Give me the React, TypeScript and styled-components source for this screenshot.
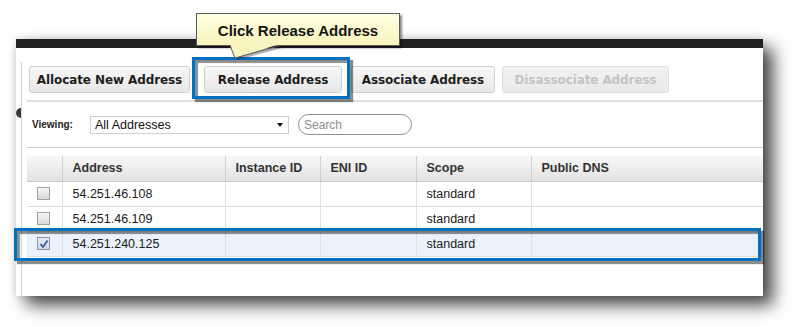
import React from 'react';
import styled, { createGlobalStyle } from 'styled-components';

const GlobalStyle = createGlobalStyle`
  body {
    margin: 0;
    background: #fff;
    font-family: "Liberation Sans", Arial, sans-serif;
  }
`;

const Canvas = styled.div`
  position: relative;
  width: 792px;
  height: 327px;
  box-sizing: border-box;
  padding: 39px 0 0 16px;
  background: #fff;
  overflow: hidden;
`;

const Panel = styled.div`
  width: 747px;
  height: 257px;
  display: flex;
  flex-direction: column;
  background: #fff;
  box-shadow: 10px 9px 16px rgba(0, 0, 0, 0.72), 0 0 8px rgba(0, 0, 0, 0.12);
`;

const DarkBar = styled.div`
  height: 9px;
  background: #222;
`;

const Body = styled.div`
  flex: 1;
  display: flex;
`;

const LeftStrip = styled.div`
  width: 5px;
`;

const Handle = styled.div`
  margin-top: 60px;
  width: 5px;
  height: 10px;
  border-radius: 5px 0 0 5px;
  background: #3a3a3a;
`;

const Content = styled.div`
  flex: 1;
  margin-top: 14px;
  border-left: 1px solid #d6d6d6;
  padding-left: 5px;
`;

const Toolbar = styled.div`
  display: flex;
  padding: 4px 0 7px 2px;
  border-bottom: 2px solid #e0e0e0;
`;

const Button = styled.button<{ $w: number; $mr?: number; $disabled?: boolean }>`
  width: ${(p) => p.$w}px;
  height: 27px;
  margin: 0 ${(p) => p.$mr ?? 0}px 0 0;
  padding: 0;
  box-sizing: border-box;
  border: 1px solid ${(p) => (p.$disabled ? '#dedede' : '#cfcfcf')};
  border-radius: 3px;
  background: ${(p) =>
    p.$disabled ? 'linear-gradient(#f2f2f2, #e9e9e9)' : 'linear-gradient(#f8f8f8, #e7e7e7)'};
  color: ${(p) => (p.$disabled ? '#c4c4c4' : '#1e1e1e')};
  font-family: "DejaVu Sans", Verdana, sans-serif;
  font-weight: bold;
  font-size: 12px;
  letter-spacing: -0.1px;
  cursor: pointer;
`;

const FilterRow = styled.div`
  height: 45px;
  display: flex;
  align-items: center;
  padding-left: 5px;
  border-bottom: 1px solid #d0d0d0;
`;

const Label = styled.span`
  width: 58px;
  font-weight: bold;
  font-size: 10px;
  color: #222;
`;

const Select = styled.div`
  position: relative;
  width: 199px;
  height: 18px;
  box-sizing: border-box;
  border: 1px solid #cfcfcf;
  padding-left: 4px;
  display: flex;
  align-items: center;
  font-size: 12.5px;
  color: #111;
`;

const Arrow = styled.span`
  margin-left: auto;
  margin-right: 5px;
  width: 0;
  height: 0;
  border-left: 3.5px solid transparent;
  border-right: 3.5px solid transparent;
  border-top: 4px solid #111;
`;

const Search = styled.div`
  margin-left: 9px;
  width: 114px;
  height: 21px;
  box-sizing: border-box;
  border: 1px solid #8f8f8f;
  border-radius: 11px;
  padding-left: 5px;
  display: flex;
  align-items: center;
  font-size: 12px;
  color: #8c8c8c;
`;

const Table = styled.table`
  margin-top: 8px;
  width: 736px;
  table-layout: fixed;
  border-collapse: collapse;
`;

const Th = styled.th<{ $w: number }>`
  width: ${(p) => p.$w}px;
  height: 25px;
  padding: 0 0 0 10px;
  box-sizing: border-box;
  text-align: left;
  font-size: 12.5px;
  font-weight: bold;
  color: #333;
  background: linear-gradient(#f8f8f8, #e2e2e2);
  border-bottom: 1px solid #c9c9c9;
  & + & {
    border-left: 1px solid #d0d0d0;
  }
`;

const Tr = styled.tr<{ $selected?: boolean }>`
  background: ${(p) => (p.$selected ? '#eaf2fd' : '#fff')};
  border-bottom: 1px solid #dcdcdc;
`;

const Td = styled.td`
  height: 24px;
  padding: 0 0 0 10px;
  font-size: 12.5px;
  color: #1a1a1a;
  & + & {
    border-left: 1px solid #e0e0e0;
  }
`;

const Check = styled.span<{ $checked?: boolean }>`
  display: block;
  width: 13px;
  height: 13px;
  box-sizing: border-box;
  border: 1px solid ${(p) => (p.$checked ? '#8a94ac' : '#a2a2a2')};
  background: ${(p) =>
    p.$checked ? 'linear-gradient(#e6ebf5, #cfd7e8)' : 'linear-gradient(#f6f6f6, #dadada)'};
  position: relative;
  svg {
    position: absolute;
    left: 1px;
    top: 1px;
  }
`;

const Callout = styled.div`
  position: absolute;
  left: 196px;
  top: 13px;
  width: 204px;
  height: 33px;
  box-sizing: border-box;
  border: 1px solid #5a5a5a;
  background: linear-gradient(#ffffe2, #f9f4bd);
  box-shadow: 2px 2px 2px rgba(0, 0, 0, 0.45);
  display: flex;
  align-items: center;
  justify-content: center;
  padding-top: 2px;
  font-weight: bold;
  font-size: 15px;
  color: #151515;
  z-index: 3;
`;

const Tail = styled.svg`
  position: absolute;
  left: 226px;
  top: 44px;
  z-index: 4;
  overflow: visible;
`;

const Highlight = styled.div<{ $l: number; $t: number; $w: number; $h: number }>`
  position: absolute;
  left: ${(p) => p.$l}px;
  top: ${(p) => p.$t}px;
  width: ${(p) => p.$w}px;
  height: ${(p) => p.$h}px;
  box-sizing: border-box;
  border: 3px solid #0070c0;
  box-shadow: 3px 3px 1px rgba(0, 0, 0, 0.45), inset 3px 3px 1px rgba(0, 0, 0, 0.45);
  z-index: 2;
`;

const rows = [
  { ip: '54.251.46.108', scope: 'standard' },
  { ip: '54.251.46.109', scope: 'standard' },
  { ip: '54.251.240.125', scope: 'standard', selected: true },
];

const CheckMark = () => (
  <svg width="10" height="10" viewBox="0 0 10 10">
    <path d="M1.5 5 L4 8 L8.5 1.5" fill="none" stroke="#2d4f9e" strokeWidth="1.6" />
  </svg>
);

const App: React.FC = () => {
  return (
    <Canvas>
      <GlobalStyle />
      <Panel>
        <DarkBar />
        <Body>
          <LeftStrip>
            <Handle />
          </LeftStrip>
          <Content>
            <Toolbar>
              <Button $w={161} $mr={14}>Allocate New Address</Button>
              <Button $w={138} $mr={9}>Release Address</Button>
              <Button $w={144} $mr={7}>Associate Address</Button>
              <Button $w={167} $disabled>Disassociate Address</Button>
            </Toolbar>
            <FilterRow>
              <Label>Viewing:</Label>
              <Select>
                All Addresses
                <Arrow />
              </Select>
              <Search>Search</Search>
            </FilterRow>
            <Table>
              <thead>
                <tr>
                  <Th $w={35} />
                  <Th $w={163}>Address</Th>
                  <Th $w={95}>Instance ID</Th>
                  <Th $w={96}>ENI ID</Th>
                  <Th $w={115}>Scope</Th>
                  <Th $w={232}>Public DNS</Th>
                </tr>
              </thead>
              <tbody>
                {rows.map((r) => (
                  <Tr key={r.ip} $selected={r.selected}>
                    <Td>
                      <Check $checked={r.selected}>{r.selected && <CheckMark />}</Check>
                    </Td>
                    <Td>{r.ip}</Td>
                    <Td />
                    <Td />
                    <Td>{r.scope}</Td>
                    <Td />
                  </Tr>
                ))}
              </tbody>
            </Table>
          </Content>
        </Body>
      </Panel>

      <Callout>Click Release Address</Callout>
      <Tail width="60" height="16">
        <path d="M6 4 L11 16 L56 4 Z" fill="rgba(0,0,0,0.3)" />
        <path d="M4 0 L9 14 L54 0 Z" fill="#f9f4bf" />
        <path d="M4 1.5 L9 14 L54 1.5" fill="none" stroke="#5a5a5a" strokeWidth="1" />
      </Tail>
      <Highlight $l={192} $t={57} $w={158} $h={42} />
      <Highlight $l={14} $t={228} $w={747} $h={33} />
    </Canvas>
  );
};

export default App;
